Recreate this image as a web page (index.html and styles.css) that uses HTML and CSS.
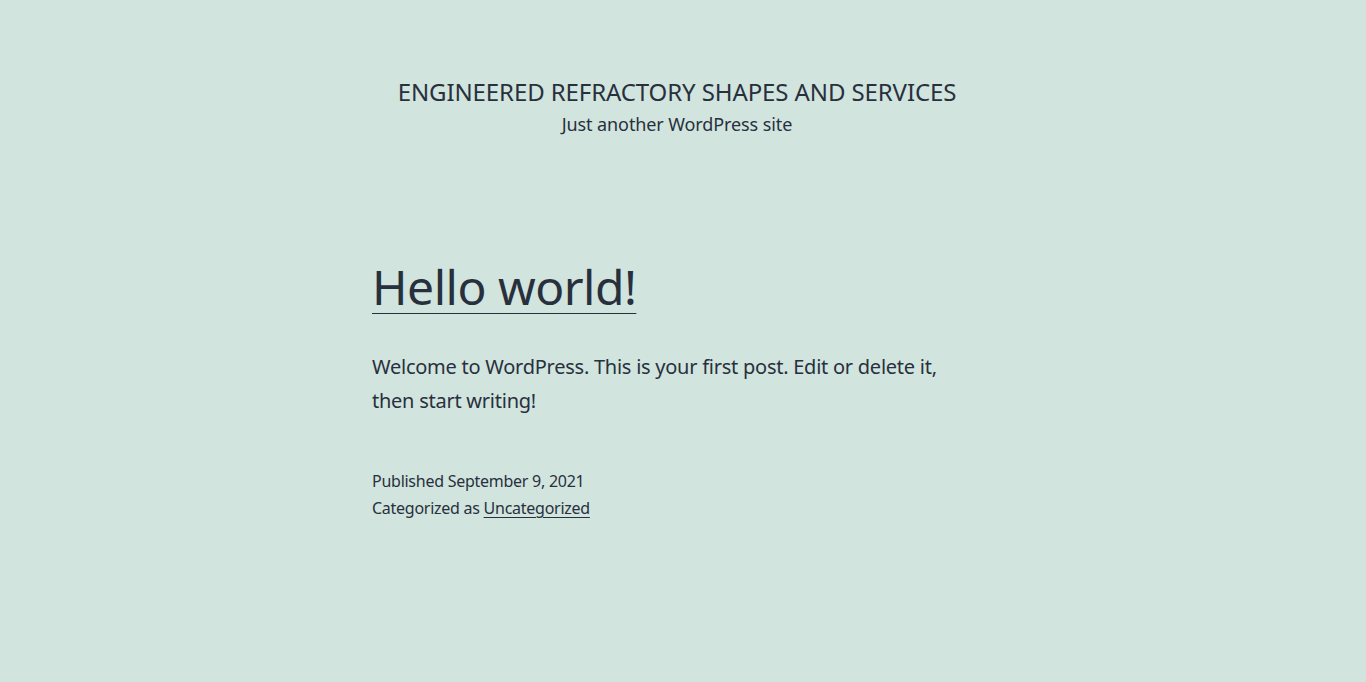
FILE: index.html
```html
<!DOCTYPE html>
<html lang="en">
<head>
<meta charset="utf-8">
<title>Engineered Refractory Shapes and Services</title>
<link rel="stylesheet" href="styles.css">
</head>
<body>
<header class="site-header">
  <p class="site-title">Engineered Refractory Shapes and Services</p>
  <p class="site-description">Just another WordPress site</p>
</header>
<main class="site-main">
  <article class="post">
    <h2 class="entry-title"><a href="#">Hello world!</a></h2>
    <div class="entry-content">
      <p>Welcome to WordPress. This is your first post. Edit or delete it, then start writing!</p>
    </div>
    <footer class="entry-footer">
      <div>Published September 9, 2021</div>
      <div>Categorized as <a href="#">Uncategorized</a></div>
    </footer>
  </article>
</main>
</body>
</html>
```

FILE: styles.css
```css
html, body {
  margin: 0;
  padding: 0;
}
body {
  background: #d1e4dd;
  color: #28303d;
  font-family: "Noto Sans", "Open Sans", sans-serif;
  min-height: 682px;
}
p { margin: 0; }
a { color: #28303d; }

.site-header {
  padding-top: 76px;
  padding-right: 12px;
  text-align: center;
}
.site-title {
  font-size: 24px;
  line-height: 31px;
  letter-spacing: -0.1px;
  text-transform: uppercase;
}
.site-description {
  margin-top: 5px;
  font-size: 18px;
  line-height: 25px;
  letter-spacing: -0.1px;
}

.site-main {
  width: 622px;
  margin: 0 auto;
  padding-top: 119px;
}
.entry-title {
  margin: 0;
  font-size: 48px;
  font-weight: 400;
  line-height: 62px;
  letter-spacing: -0.5px;
}
.entry-title a {
  text-decoration: underline;
  text-decoration-thickness: 1px;
  text-underline-offset: 8px;
}
.entry-content {
  margin-top: 32px;
  max-width: 600px;
  font-size: 20px;
  line-height: 34px;
  letter-spacing: -0.25px;
}
.entry-footer {
  margin-top: 50px;
  font-size: 16px;
  line-height: 27px;
  letter-spacing: -0.26px;
}
.entry-footer a {
  text-decoration-thickness: 1px;
  text-underline-offset: 3px;
}
```
